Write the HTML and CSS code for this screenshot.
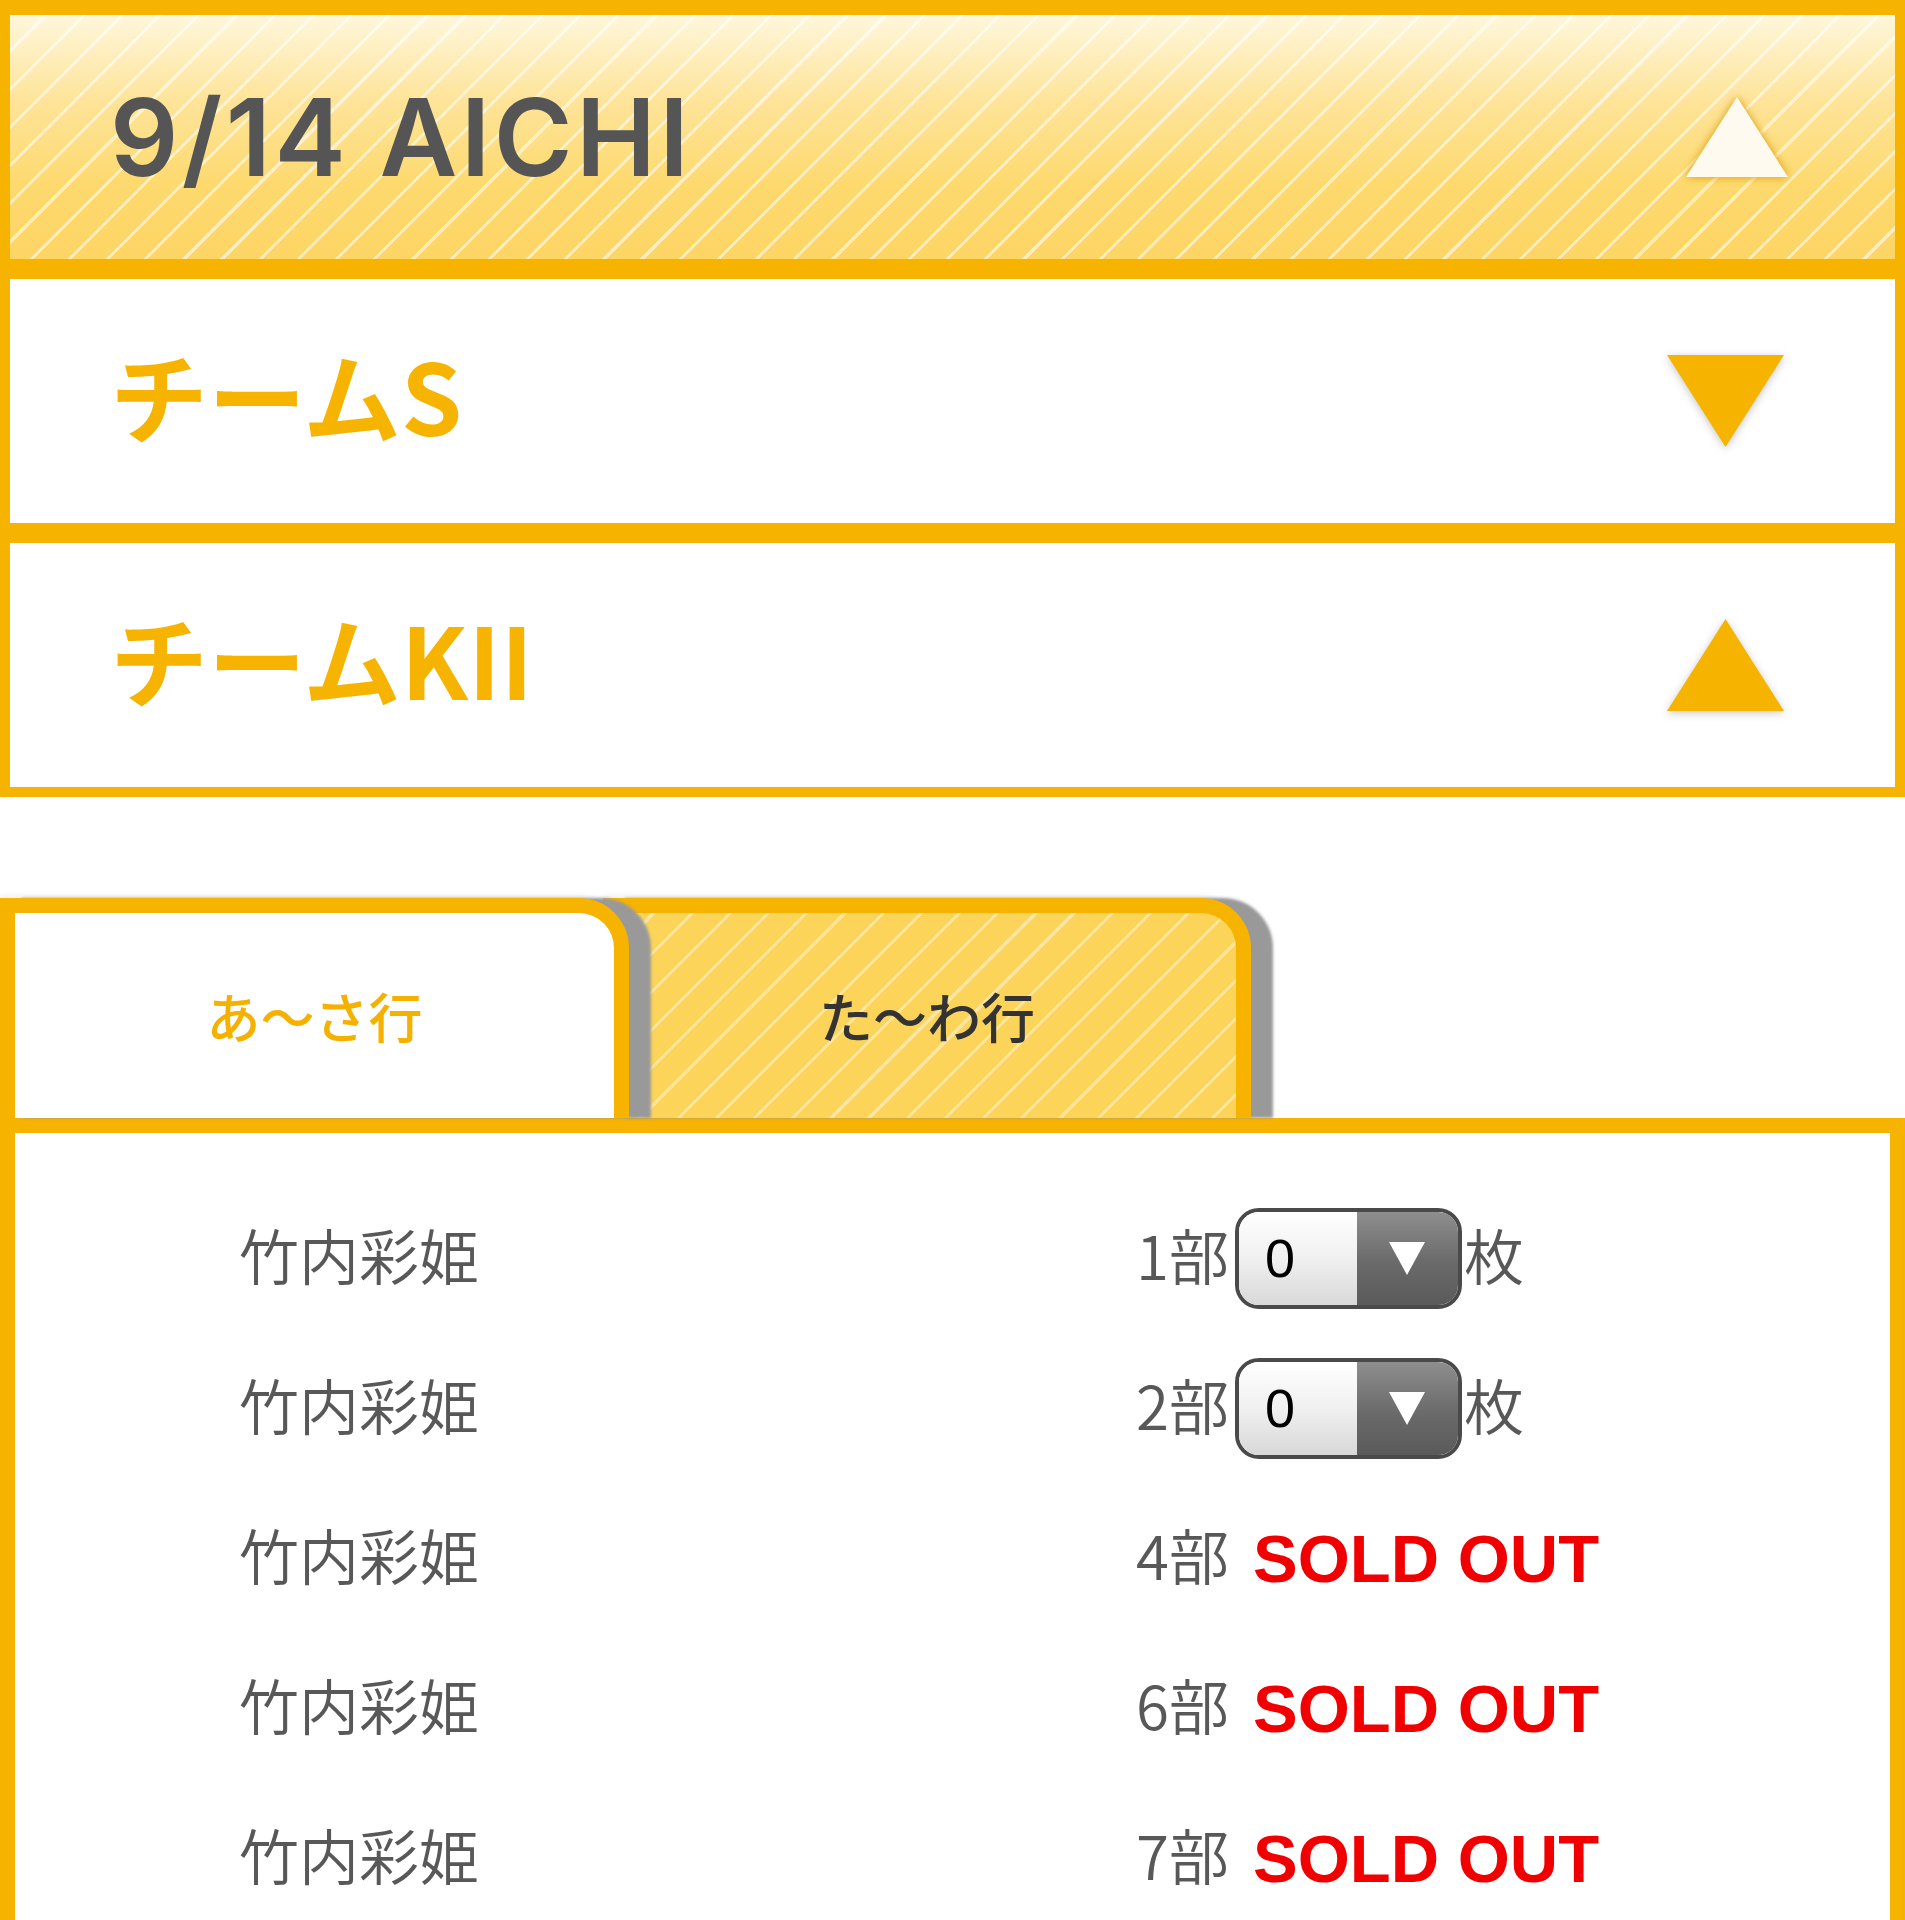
FILE: index.html
```html
<!DOCTYPE html>
<html lang="ja">
<head>
    <meta charset="UTF-8">
    <meta name="viewport" content="width=device-width, initial-scale=1.0">
    <title>チケット申込</title>
    <link rel="stylesheet" href="styles.css">
</head>
<body>
    <!-- event / team accordion -->
    <div class="accordion">
        <div class="acc-item acc-event">
            <span class="event-title">9/14 AICHI</span>
            <svg class="arrow arrow-light" width="106" height="84" viewBox="0 0 106 84"><polygon points="53,2 104,82 2,82"/></svg>
        </div>
        <div class="acc-item">
            <span class="team-title">チームS</span>
            <svg class="arrow" width="117" height="92" viewBox="0 0 117 92"><polygon points="0,0 117,0 58.5,92"/></svg>
        </div>
        <div class="acc-item">
            <span class="team-title">チームKII</span>
            <svg class="arrow" width="117" height="92" viewBox="0 0 117 92"><polygon points="58.5,0 117,92 0,92"/></svg>
        </div>
    </div>

    <!-- kana tabs -->
    <div class="tabs">
        <div class="tab tab-active">あ〜さ行</div>
        <div class="tab tab-other">た〜わ行</div>
    </div>

    <div class="panel">
        <div class="row">
            <span class="member">竹内彩姫</span>
            <div class="slot">
                <span class="part">1部</span>
                <div class="picker">
                    <span class="picker-value">0</span>
                    <span class="picker-btn"><svg width="36" height="33" viewBox="0 0 36 33"><polygon points="0,0 36,0 18,33"/></svg></span>
                </div>
                <span class="part">枚</span>
            </div>
        </div>
        <div class="row">
            <span class="member">竹内彩姫</span>
            <div class="slot">
                <span class="part">2部</span>
                <div class="picker">
                    <span class="picker-value">0</span>
                    <span class="picker-btn"><svg width="36" height="33" viewBox="0 0 36 33"><polygon points="0,0 36,0 18,33"/></svg></span>
                </div>
                <span class="part">枚</span>
            </div>
        </div>
        <div class="row">
            <span class="member">竹内彩姫</span>
            <div class="slot">
                <span class="part">4部</span>
                <span class="sold-out">SOLD OUT</span>
            </div>
        </div>
        <div class="row">
            <span class="member">竹内彩姫</span>
            <div class="slot">
                <span class="part">6部</span>
                <span class="sold-out">SOLD OUT</span>
            </div>
        </div>
        <div class="row">
            <span class="member">竹内彩姫</span>
            <div class="slot">
                <span class="part">7部</span>
                <span class="sold-out">SOLD OUT</span>
            </div>
        </div>
    </div>
</body>
</html>
```

FILE: styles.css
```css
/* ticket page, yellow theme */
html, body {
    overflow: hidden;
}
body {
    margin: 0;
    background: #fff;
    font-family: "Noto Sans CJK JP", "Noto Sans", sans-serif;
}

.accordion {
    display: flex;
    flex-direction: column;
}
.acc-item {
    height: 244px;
    border: 10px solid #f6b400;
    padding: 0 105px 0 100px;
    display: flex;
    align-items: center;
    justify-content: space-between;
    background: #fff;
}
.acc-event {
    border-top-width: 15px;
    background:
        repeating-linear-gradient(135deg, transparent 0 24px, rgba(255, 255, 255, 0.55) 24px 27px),
        linear-gradient(#fff7dc 0%, #fee49a 35%, #fdd96e 70%, #fdd565 100%);
}
.acc-item + .acc-item {
    padding-right: 111px;
}
.event-title {
    font-family: Inter, "Liberation Sans", Arial, sans-serif;
    font-weight: 600;
    font-size: 107px;
    letter-spacing: 3.4px;
    color: #555;
}
.team-title {
    font-weight: bold;
    font-size: 98px;
    color: #f6b400;
    padding-bottom: 16px;
}
.arrow polygon {
    fill: #f6b400;
}
.arrow {
    filter: drop-shadow(0 2px 4px rgba(0, 0, 0, 0.22));
}
.arrow-light polygon {
    fill: #fffaf0;
}
.arrow-light {
    filter: drop-shadow(0 0 4px #d99a00);
}

.tabs {
    display: flex;
    margin-top: 101px;
}
.tab {
    box-sizing: border-box;
    height: 220px;
    border: 15px solid #f6b400;
    border-bottom: none;
    border-top-right-radius: 50px;
    display: flex;
    align-items: center;
    justify-content: center;
    font-weight: 500;
    font-size: 54px;
    position: relative;
    box-shadow: 22px 0 3px #999, 0 -3px 5px rgba(0, 0, 0, 0.06);
}
.tab-active {
    width: 629px;
    background: #fff;
    color: #f5b000;
    z-index: 2;
}
.tab-other {
    width: 648px;
    margin-left: -26px;
    color: #333;
    z-index: 1;
    background:
        repeating-linear-gradient(135deg, transparent 0 24px, rgba(255, 255, 255, 0.4) 24px 27px),
        #fdd45a;
}

.panel {
    border: 15px solid #f6b400;
    border-bottom: none;
    padding: 50px 0 0 224px;
}
.row {
    height: 150px;
    display: grid;
    grid-template-columns: 897px auto;
    align-items: center;
}
.member {
    font-size: 60px;
    font-weight: 350;
    color: #585858;
    padding-bottom: 10px;
}
.slot {
    display: flex;
    align-items: center;
}
.part {
    font-size: 60px;
    font-weight: 350;
    color: #585858;
    padding-bottom: 10px;
}
.picker {
    box-sizing: border-box;
    width: 227px;
    height: 101px;
    margin: 0 2px 0 6px;
    border: 4px solid #4a4a4a;
    border-radius: 24px;
    overflow: hidden;
    display: flex;
}
.picker-value {
    width: 118px;
    box-sizing: border-box;
    padding-left: 26px;
    display: flex;
    align-items: center;
    font-family: "Liberation Sans", Arial, sans-serif;
    font-size: 54px;
    color: #000;
    background: linear-gradient(#ffffff, #f0f0f0 50%, #d8d8d8);
}
.picker-btn {
    flex: 1;
    display: flex;
    align-items: center;
    justify-content: center;
    background: linear-gradient(#8e8e8e, #6a6a6a 55%, #5a5a5a);
}
.picker-btn polygon {
    fill: #fff;
}
.sold-out {
    margin-left: 24px;
    font-family: "Liberation Sans", Arial, sans-serif;
    font-weight: bold;
    font-size: 67px;
    color: #f00000;
}
```
